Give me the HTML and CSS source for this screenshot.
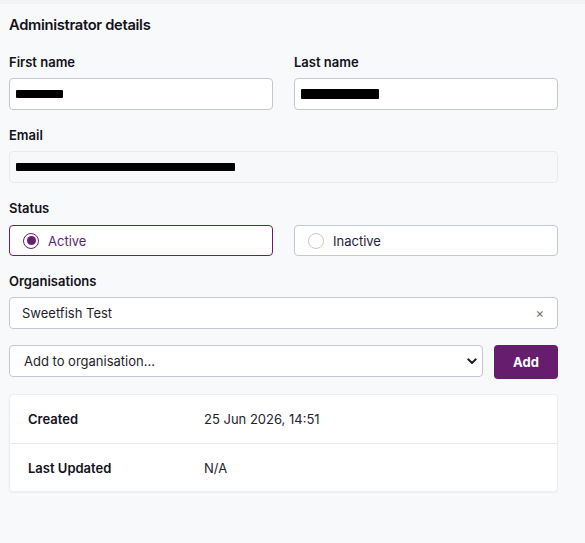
FILE: index.html
```html
<!DOCTYPE html>
<html lang="en">
<head>
<meta charset="utf-8">
<title>Administrator details</title>
<link rel="stylesheet" href="styles.css">
</head>
<body>
<div class="topbar"></div>
<main class="page">
  <h2 class="title">Administrator details</h2>

  <div class="row two">
    <div class="field">
      <label class="label">First name</label>
      <div class="input"><span class="redact" style="width:47px"></span></div>
    </div>
    <div class="field">
      <label class="label">Last name</label>
      <div class="input"><span class="redact tall" style="width:78px"></span></div>
    </div>
  </div>

  <div class="field">
    <label class="label">Email</label>
    <div class="input disabled"><span class="redact" style="width:219px"></span></div>
  </div>

  <div class="field status">
    <label class="label">Status</label>
    <div class="two">
      <div class="radio-box checked">
        <span class="radio"><span class="dot"></span></span>
        <span class="radio-text">Active</span>
      </div>
      <div class="radio-box">
        <span class="radio"></span>
        <span class="radio-text">Inactive</span>
      </div>
    </div>
  </div>

  <div class="field orgs">
    <label class="label">Organisations</label>
    <div class="input tag">
      <span>Sweetfish Test</span>
      <span class="close">×</span>
    </div>
  </div>

  <div class="add-row">
    <div class="input select">
      <span>Add to organisation...</span>
      <svg class="chev" width="10" height="7" viewBox="0 0 10 7"><path d="M1.2 1.3 L5 5 L8.8 1.3" fill="none" stroke="#1b1b22" stroke-width="1.9" stroke-linecap="round" stroke-linejoin="round"/></svg>
    </div>
    <button class="btn">Add</button>
  </div>

  <div class="card">
    <div class="card-row">
      <span class="card-key">Created</span>
      <span class="card-val">25 Jun 2026, 14:51</span>
    </div>
    <div class="card-row">
      <span class="card-key">Last Updated</span>
      <span class="card-val">N/A</span>
    </div>
  </div>
</main>
</body>
</html>
```

FILE: styles.css
```css
* { box-sizing: border-box; }

body {
  margin: 0;
  background: #f8f9fb;
  font-family: Inter, "Noto Sans", sans-serif;
  color: #121219;
  width: 585px;
  height: 543px;
  overflow: hidden;
}

.topbar {
  height: 4px;
  background: #f2f3f5;
}

.page {
  padding: 12px 27px 0 9px;
}

.title {
  margin: 0 0 20px;
  font-size: 14.7px;
  font-weight: 600;
  letter-spacing: -0.3px;
  line-height: 18px;
}

.two {
  display: grid;
  grid-template-columns: 1fr 1fr;
  column-gap: 21px;
}

.field {
  margin-bottom: 17px;
}

.row.two {
  margin-bottom: 17px;
}
.row.two .field { margin-bottom: 0; }

.field.status { margin-bottom: 17px; }
.field.status .label { margin-bottom: 9px; }
.field.orgs { margin-bottom: 16px; }

.label {
  display: block;
  font-size: 13px;
  font-weight: 600;
  line-height: 16px;
  margin-bottom: 8px;
}

.input {
  height: 32px;
  background: #fff;
  border: 1px solid #c3c8d0;
  border-radius: 4px;
  display: flex;
  align-items: center;
  padding: 0 13px 0 6px;
  font-size: 13px;
  color: #1e1e2a;
}

.input.disabled {
  background: #f7f8fa;
  border-color: #e8eaee;
}

.redact {
  display: inline-block;
  height: 8px;
  background: #000;
  border-radius: 1px;
}
.redact.tall { height: 10px; }

.radio-box {
  height: 31px;
  background: #fff;
  border: 1px solid #c3c8d0;
  border-radius: 4px;
  display: flex;
  align-items: center;
  padding-left: 13px;
  gap: 9px;
  font-size: 13px;
  color: #23233a;
}

.radio-box.checked {
  border-color: #6b1d72;
  color: #5f2474;
}

.radio {
  width: 16px;
  height: 16px;
  border-radius: 50%;
  border: 1px solid #c3c8d0;
  display: flex;
  align-items: center;
  justify-content: center;
}

.checked .radio {
  border: 1.5px solid #6b1d72;
}

.dot {
  width: 9px;
  height: 9px;
  border-radius: 50%;
  background: #6b1d72;
}

.tag {
  justify-content: space-between;
  padding-left: 12px;
  padding-right: 13px;
}

.close {
  color: #6b6f78;
  font-size: 13px;
}

.add-row {
  display: flex;
  gap: 11px;
  margin-bottom: 15px;
}

.select {
  flex: 1;
  justify-content: space-between;
  padding-left: 14px;
  padding-right: 5px;
}

.btn {
  width: 64px;
  height: 34px;
  border: none;
  border-radius: 4px;
  background: #661d6e;
  color: #fff;
  font-family: inherit;
  font-size: 13px;
  font-weight: 700;
}

.card {
  background: #fff;
  border: 1px solid #eceef1;
  border-radius: 4px;
  box-shadow: 0 1px 2px rgba(20, 20, 40, 0.05);
}

.card-row {
  height: 48px;
  display: flex;
  align-items: center;
  padding-left: 18px;
  font-size: 13px;
}

.card-row + .card-row {
  border-top: 1px solid #e9ebef;
}

.card-key {
  width: 176px;
  font-weight: 600;
}

.card-val {
  color: #23232e;
}
```
